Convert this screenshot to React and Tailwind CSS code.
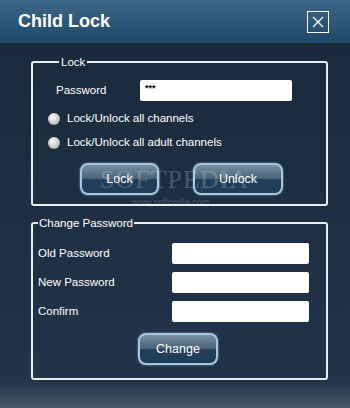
import { useState } from "react";

function Field({ label, value = "" }) {
  return (
    <div className="flex items-center h-[21px]">
      <span className="w-[134px] text-[11.5px]">{label}</span>
      <input
        type="password"
        defaultValue={value}
        className="w-[137px] h-[21px] bg-white rounded-[2px] outline-none text-black text-[10px] px-1"
      />
    </div>
  );
}

function GlassButton({ children, className = "" }) {
  return (
    <button
      className={
        "h-[32px] rounded-[8px] border-2 border-[#a9c6de] bg-[linear-gradient(#7890a4_0%,#4b6378_48%,#22405c_52%,#1f3c58_100%)] text-white text-[12.5px] shadow-[0_0_2px_#8fb2d0] " +
        className
      }
    >
      {children}
    </button>
  );
}

function Radio({ label }) {
  return (
    <label className="flex items-center gap-[7px] h-[16px]">
      <span className="w-[12px] h-[12px] rounded-full bg-[radial-gradient(circle_at_40%_35%,#ffffff,#c8c8c8_55%,#8a8a8a)]" />
      <span className="text-[11.5px]">{label}</span>
    </label>
  );
}

export default function App() {
  const [pw] = useState("***");

  return (
    <div
      className="w-[350px] h-[408px] flex flex-col text-white relative overflow-hidden"
      style={{ fontFamily: '"Liberation Sans", Arial, sans-serif' }}
    >
      {/* title bar */}
      <div className="h-[43px] flex items-center justify-between pl-[18px] pr-[21px] bg-[linear-gradient(#3e6787,#1e4869)]">
        <span className="text-[18px] font-bold">Child Lock</span>
        <button className="w-[22px] h-[22px] border border-white flex items-center justify-center">
          <svg width="14" height="14" viewBox="0 0 14 14" stroke="white" strokeWidth="1.3">
            <path d="M2 2L12 12M12 2L2 12" />
          </svg>
        </button>
      </div>

      {/* body */}
      <div className="flex-1 bg-[linear-gradient(#1a2a3c,#22344a)] pt-[13px] pl-[31px] pr-[22px] flex flex-col gap-[11px]">
        <fieldset className="border-2 border-[#e8eef2] rounded-[3px] h-[150px] px-[21px] pt-[12px] shrink-0">
          <legend className="text-[11.5px] px-[2px] ml-[5px] leading-[12px]">Lock</legend>
          <div className="flex items-center h-[21px] ml-[2px]">
            <span className="w-[84px] text-[11.5px]">Password</span>
            <input
              type="text"
              defaultValue={pw}
              className="w-[152px] h-[21px] bg-white rounded-[2px] outline-none text-black text-[9px] font-bold px-[5px] pb-[6px]"
            />
          </div>
          <div className="flex flex-col gap-[8px] mt-[10px] ml-[-6px]">
            <Radio label="Lock/Unlock all channels" />
            <Radio label="Lock/Unlock all adult channels" />
          </div>
          <div className="flex mt-[12px] ml-[26px] gap-[34px]">
            <GlassButton className="w-[79px]">Lock</GlassButton>
            <GlassButton className="w-[90px]">Unlock</GlassButton>
          </div>
        </fieldset>

        <fieldset className="border-2 border-[#e8eef2] rounded-[3px] h-[163px] pl-[5px] pt-[14px] shrink-0">
          <legend className="text-[11.5px] px-[1px] leading-[12px]">Change Password</legend>
          <div className="flex flex-col gap-[8px]">
            <Field label="Old Password" />
            <Field label="New Password" />
            <Field label="Confirm" />
          </div>
          <div className="flex mt-[11px] ml-[100px]">
            <GlassButton className="w-[80px]">Change</GlassButton>
          </div>
        </fieldset>
      </div>

      {/* bottom strip */}
      <div className="h-[26px] bg-[linear-gradient(#22354a,#475966)]" />

      {/* watermark */}
      <div className="absolute left-[100px] top-[160px] text-[26px] tracking-[1px] text-white/20 pointer-events-none" style={{ fontFamily: '"Liberation Serif", serif' }}>
        SOFTPEDIA
      </div>
      <div className="absolute left-[132px] top-[196px] text-[9px] text-white/20 pointer-events-none">
        www.softpedia.com
      </div>
    </div>
  );
}
